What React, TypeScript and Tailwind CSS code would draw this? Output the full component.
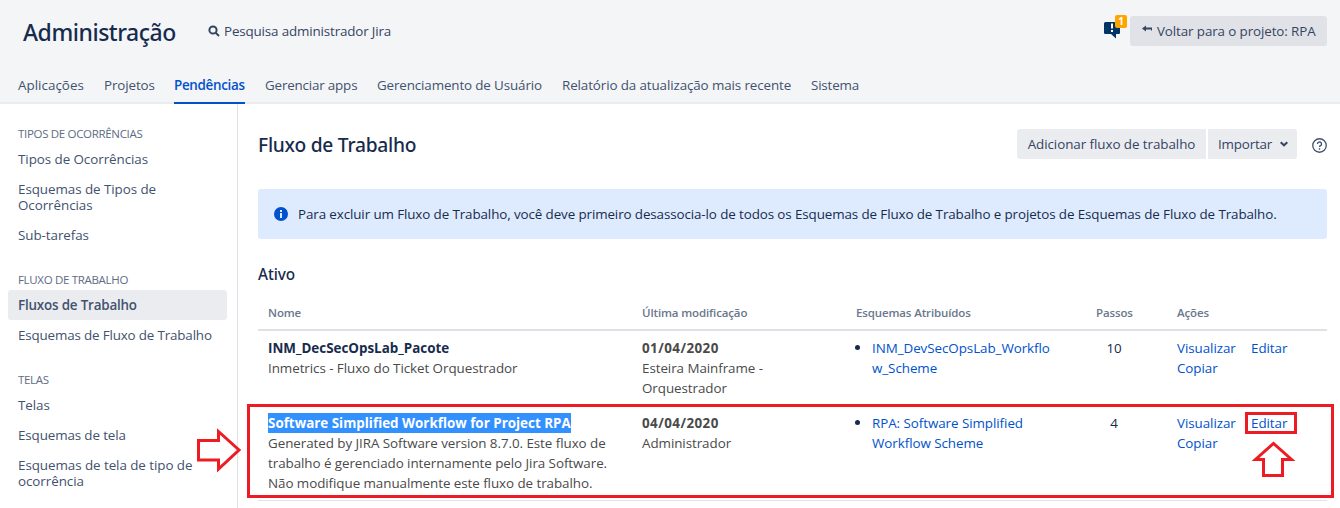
import type { ReactNode } from 'react';

const tabs = [
  { label: 'Aplicações', cls: 'w-[66px] tracking-[0.02px]' },
  { label: 'Projetos', cls: 'w-[50px] tracking-[-0.12px]' },
  { label: 'Pendências', cls: 'w-[71px] tracking-[-0.3px]', active: true },
  { label: 'Gerenciar apps', cls: 'w-[92px] tracking-[-0.18px]' },
  { label: 'Gerenciamento de Usuário', cls: 'w-[165px] tracking-[-0.13px]' },
  { label: 'Relatório da atualização mais recente', cls: 'w-[229px] tracking-[-0.11px]' },
  { label: 'Sistema', cls: 'w-[48px] tracking-[-0.18px]' },
];

function SideHeading({ children }: { children: ReactNode }) {
  return (
    <h3 className="flex h-4 items-center pl-2.5 text-[11.5px] tracking-[-0.32px] text-[#5e6c84]">
      {children}
    </h3>
  );
}

function SideItem({ children, active, cls = '' }: { children: ReactNode; active?: boolean; cls?: string }) {
  return (
    <li
      className={`rounded-[3px] px-2.5 py-[7px] leading-4 whitespace-nowrap ${
        active ? 'bg-[#ebecf0] font-semibold' : ''
      } ${cls}`}
    >
      {children}
    </li>
  );
}

function Row({ name, date, by, scheme, steps, edit }: {
  name: ReactNode; date: string; by: ReactNode; scheme: ReactNode; steps: number; edit?: ReactNode;
}) {
  return (
    <div className="grid grid-cols-[374px_214px_240px_81px_160px] border-b border-[#dfe1e6] py-[7px] leading-5">
      <div className="pl-2.5 whitespace-nowrap text-[#4a4a4a]">{name}</div>
      <div className="pl-2.5 whitespace-nowrap text-[#4a4a4a]">
        <b className="tracking-[0.45px]">{date}</b>
        <br />
        {by}
      </div>
      <div className="flex pl-2.5">
        <span className="mt-[7px] mr-[11px] ml-[-1px] size-[5px] shrink-0 rounded-full bg-[#172b4d]" />
        <a className="pl-px whitespace-nowrap text-[#0052cc]">{scheme}</a>
      </div>
      <div className="pr-[25px] text-center text-[#172b4d]">{steps}</div>
      <div className="pl-2.5 text-[#0052cc]">
        <div className="flex">
          <a className="w-[74px]">Visualizar</a>
          {edit ?? <a>Editar</a>}
        </div>
        <a>Copiar</a>
      </div>
    </div>
  );
}

export default function App() {
  return (
    <div className="relative h-[508px] w-[1340px] overflow-hidden bg-white font-['Open_Sans','Noto_Sans',sans-serif] text-[13.4px] tracking-[-0.06px] text-[#172b4d]">
      <header className="h-[104px] border-b-2 border-[#ebecf0] bg-[#f4f5f7]">
        <div className="flex h-[62px] items-center pr-[13px] pl-[23px]">
          <h1 className="mt-0.5 w-[185px] font-['Noto_Sans',sans-serif] text-[23px] font-medium tracking-[-0.47px]">
            Administração
          </h1>
          <div className="flex items-center gap-1 tracking-[-0.15px] text-[#344563]">
            <svg className="mt-px size-3" viewBox="0 0 12 12" fill="none" stroke="#344563" strokeWidth="2">
              <circle cx="5" cy="5" r="3.6" />
              <path d="M7.6 7.6 11 11" />
            </svg>
            Pesquisa administrador Jira
          </div>
          <div className="relative ml-auto h-6 w-[26px]">
            <svg className="absolute top-[3px] left-0 size-[17px]" viewBox="0 0 17 17">
              <path fill="#003366" d="M1.500 0H15q1 0 1 1v10q0 1-1 1h-3v4.500L7 12H1.500Q0 12 0 11V1.500Q0 0 1.500 0Z" />
              <path fill="#fff" d="M7 1.500h2v5H7zM7 8h2v2H7z" />
            </svg>
            <span className="absolute top-[-4px] left-[11px] flex h-[13px] w-3 items-center justify-center rounded-[2px] bg-[#ffa500] text-[10px] font-bold text-white">
              1
            </span>
          </div>
          <button className="flex h-[30px] w-[197px] items-center gap-[5px] rounded-[3px] bg-[#e1e2e7] pl-3 tracking-[-0.11px] whitespace-nowrap text-[#344563]">
            <svg className="-mt-[5px] h-2 w-2.5 shrink-0" viewBox="0 0 10 8">
              <path fill="#344563" d="M0 3.500 4 .5v2h6v3H9v-1H4v2Z" />
            </svg>
            Voltar para o projeto: RPA
          </button>
        </div>
        <nav className="flex h-[42px] gap-5 pl-[18px] text-[#42526e]">
          {tabs.map((t) => (
            <a
              key={t.label}
              className={`h-[42px] pt-[13px] leading-5 whitespace-nowrap ${t.cls} ${
                t.active ? 'border-b-2 border-[#0052cc] font-semibold text-[#0052cc]' : ''
              }`}
            >
              {t.label}
            </a>
          ))}
        </nav>
      </header>

      <div className="flex h-[404px]">
        <aside className="w-[238px] shrink-0 border-r border-[#dfe1e6] pt-[22px] pr-2.5 pl-2 text-[#42526e]">
          <SideHeading>TIPOS DE OCORRÊNCIAS</SideHeading>
          <ul className="mt-0.5 mb-[22px]">
            <SideItem>Tipos de Ocorrências</SideItem>
            <SideItem>
              Esquemas de Tipos de
              <br />
              Ocorrências
            </SideItem>
            <SideItem>Sub-tarefas</SideItem>
          </ul>
          <SideHeading>FLUXO DE TRABALHO</SideHeading>
          <ul className="mt-0.5 mb-[22px]">
            <SideItem active cls="tracking-[-0.18px]">Fluxos de Trabalho</SideItem>
            <SideItem cls="tracking-[-0.16px]">Esquemas de Fluxo de Trabalho</SideItem>
          </ul>
          <SideHeading>TELAS</SideHeading>
          <ul className="mt-0.5">
            <SideItem>Telas</SideItem>
            <SideItem cls="tracking-[-0.12px]">Esquemas de tela</SideItem>
            <SideItem>
              Esquemas de tela de tipo de
              <br />
              ocorrência
            </SideItem>
          </ul>
        </aside>

        <main className="ml-5 w-[1069px] pt-[25px]">
          <div className="flex h-[30px] items-center">
            <h2 className="mt-0.5 mr-auto font-['Noto_Sans',sans-serif] text-[19.2px] font-medium tracking-[-0.24px]">
              Fluxo de Trabalho
            </h2>
            <button className="h-[30px] w-[189px] rounded-l-[3px] bg-[#ebecf0] whitespace-nowrap text-[#344563]">
              Adicionar fluxo de trabalho
            </button>
            <button className="ml-0.5 flex h-[30px] w-[89px] items-center rounded-r-[3px] bg-[#ebecf0] pl-2.5 tracking-[-0.18px] text-[#344563]">
              <span className="w-[62px] text-left">Importar</span>
              <svg className="h-[6px] w-2" viewBox="0 0 8 6" fill="none" stroke="#344563" strokeWidth="2">
                <path d="M.7 1.200 4 4.300 7.300 1.200" />
              </svg>
            </button>
            <svg className="mt-0.5 ml-[15px] size-[15px]" viewBox="0 0 14 14" fill="none" stroke="#42526e" strokeWidth="1.200">
              <circle cx="7" cy="7" r="6.300" />
              <path strokeWidth="1.300" d="M5.100 5.600a1.900 1.900 0 1 1 2.900 1.600Q7 7.700 7 8.500M7 9.600v1.300" />
            </svg>
          </div>

          <div className="mt-[30px] flex h-[50px] items-center rounded-[3px] bg-[#deebff] pl-4 tracking-[-0.105px] whitespace-nowrap">
            <svg className="mr-[10px] size-[14px]" viewBox="0 0 14 14">
              <circle cx="7" cy="7" r="7" fill="#0052cc" />
              <path fill="#deebff" d="M6 3h2v2H6zM6 6h2v5H6z" />
            </svg>
            Para excluir um Fluxo de Trabalho, você deve primeiro desassocia-lo de todos os Esquemas de Fluxo de
            Trabalho e projetos de Esquemas de Fluxo de Trabalho.
          </div>

          <h3 className="mt-[25px] h-5 font-['Noto_Sans',sans-serif] text-[15.3px] leading-5 font-medium">Ativo</h3>

          <div className="mt-[17px] grid h-[30px] grid-cols-[374px_214px_240px_81px_160px] border-b-2 border-[#dfe1e6] pt-0.5 text-[11.5px] leading-5 font-semibold tracking-[-0.13px] text-[#6b778c]">
            <div className="pl-2.5">Nome</div>
            <div className="pl-2.5">Última modificação</div>
            <div className="pl-2.5">Esquemas Atribuídos</div>
            <div className="pl-2.5">Passos</div>
            <div className="pl-2.5">Ações</div>
          </div>

          <Row
            name={
              <>
                <b className="tracking-normal text-[#172b4d]">INM_DecSecOpsLab_Pacote</b>
                <br />
                Inmetrics - Fluxo do Ticket Orquestrador
              </>
            }
            date="01/04/2020"
            by={
              <>
                Esteira Mainframe -<br />
                Orquestrador
              </>
            }
            scheme={
              <>
                INM_DevSecOpsLab_Workflo
                <br />
                w_Scheme
              </>
            }
            steps={10}
          />
          <Row
            name={
              <>
                <b className="inline-block h-5 w-[303px] bg-[#3390ff] align-top tracking-normal text-white">
                  Software Simplified Workflow for Project RPA
                </b>
                <br />
                Generated by JIRA Software version 8.7.0. Este fluxo de
                <br />
                trabalho é gerenciado internamente pelo Jira Software.
                <br />
                Não modifique manualmente este fluxo de trabalho.
              </>
            }
            date="04/04/2020"
            by="Administrador"
            scheme={
              <>
                RPA: Software Simplified
                <br />
                Workflow Scheme
              </>
            }
            steps={4}
            edit={
              <a className="relative">
                Editar
                <span className="absolute -top-px -left-[6px] h-[22px] w-[52px] border-[3px] border-[#ed1c24]" />
              </a>
            }
          />
        </main>
      </div>

      <div className="absolute top-[404px] left-[247px] h-[94px] w-[1087px] border-[3px] border-[#ed1c24]" />
      <svg className="absolute top-[425px] left-[190px] h-[50px] w-[56px]" viewBox="190 425 56 50" fill="#fff" stroke="#ed1c24" strokeWidth="3">
        <path d="M198.500 440.500H218.500V431.500L239 450 218.500 469V460H198.500Z" />
      </svg>
      <svg className="absolute top-[438px] left-[1248px] h-[42px] w-[50px]" viewBox="1248 438 50 42" fill="#fff" stroke="#ed1c24" strokeWidth="3">
        <path d="M1263.500 475.500V459.500H1255.500L1273.500 443.500 1291.500 459.500H1282.500V475.500Z" />
      </svg>
    </div>
  );
}
